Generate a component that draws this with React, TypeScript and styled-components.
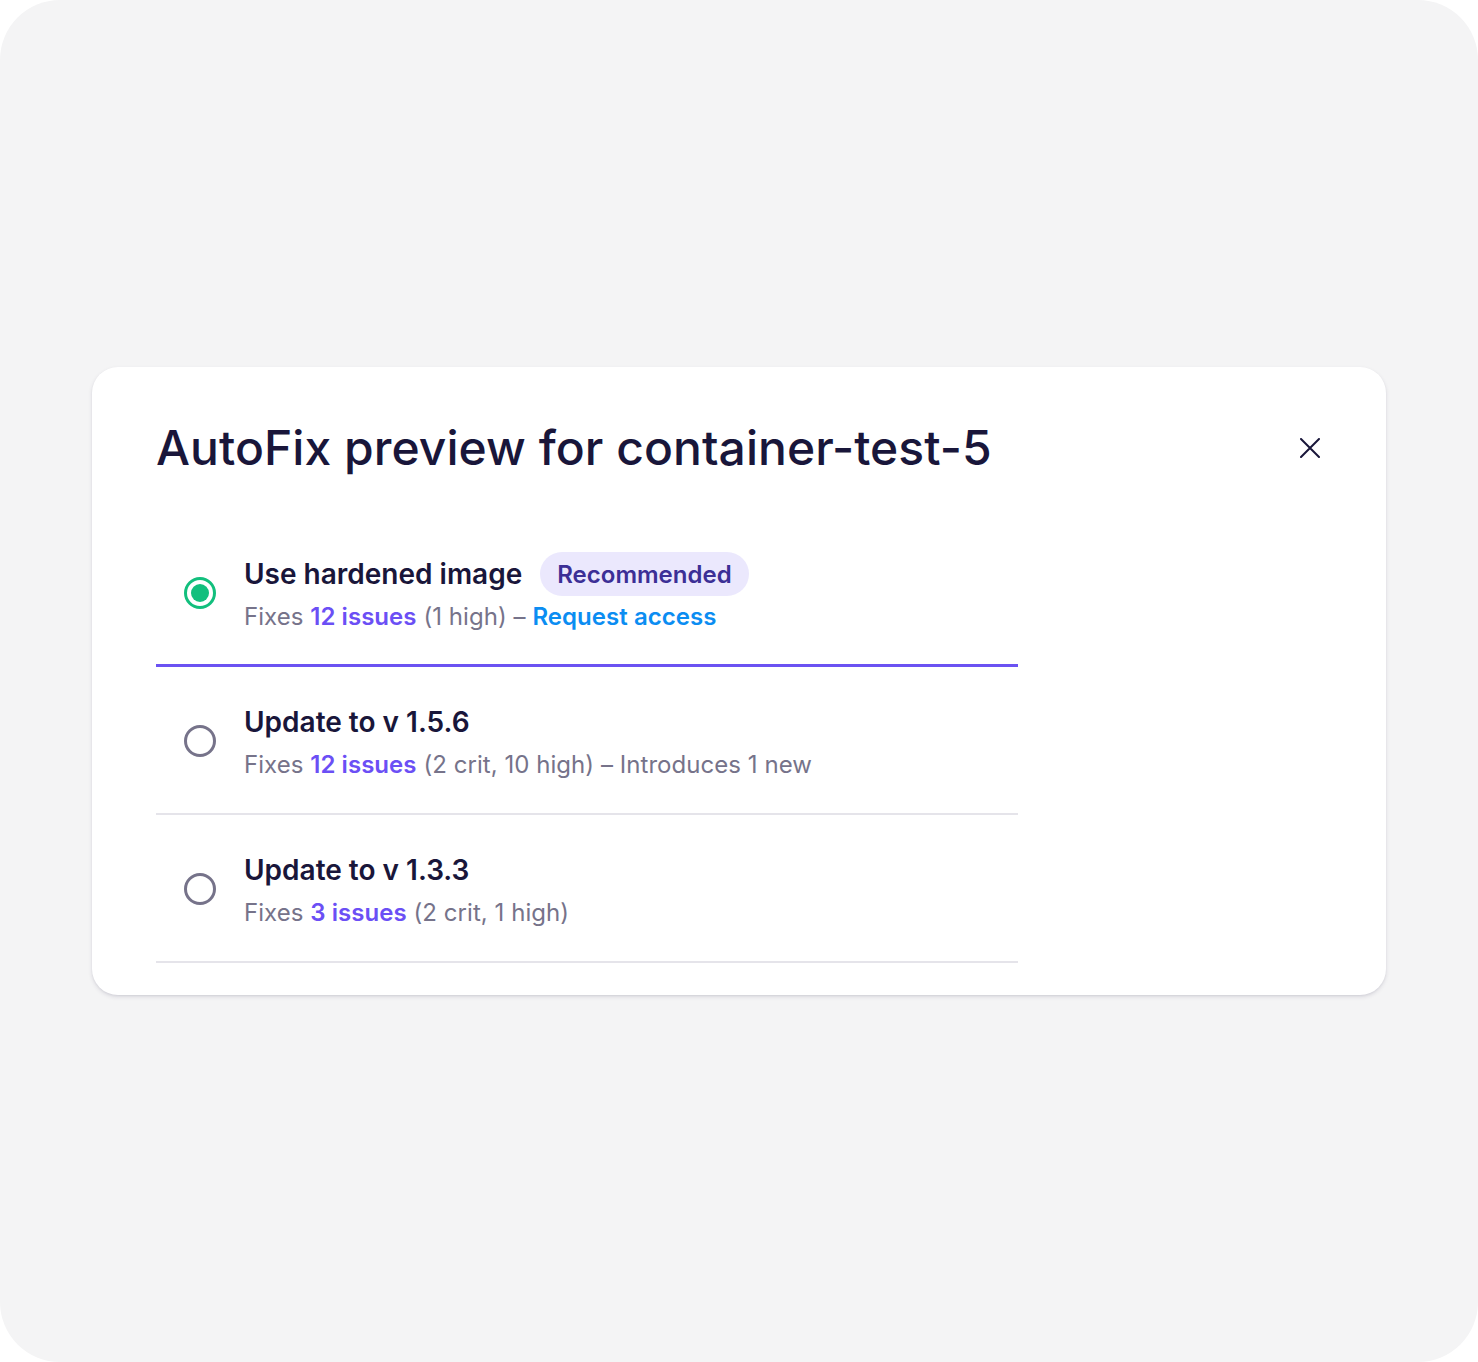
import React from "react";
import styled, { createGlobalStyle } from "styled-components";

const GlobalStyle = createGlobalStyle`
  html, body { margin: 0; padding: 0; background: #ffffff; }
  body { font-family: Inter, "Noto Sans", "Liberation Sans", sans-serif; -webkit-font-smoothing: antialiased; }
  * { box-sizing: border-box; }
`;

const Frame = styled.div`
  width: 1478px;
  height: 1362px;
  border-radius: 60px;
  background: #f4f4f5;
  display: flex;
  align-items: center;
  justify-content: center;
`;

const Card = styled.div`
  width: 1294px;
  background: #ffffff;
  border-radius: 26px;
  box-shadow: 0 2px 4px rgba(40, 36, 70, 0.12), 0 1px 2px rgba(40, 36, 70, 0.06);
  padding: 52px 64px 32px 64px;
  display: flex;
  flex-direction: column;
`;

const Header = styled.div`
  display: flex;
  align-items: center;
  justify-content: space-between;
  margin-bottom: 42px;
`;

const Title = styled.h1`
  margin: 0;
  font-size: 48px;
  line-height: 58px;
  font-weight: 500;
  color: #19163a;
  letter-spacing: 0.05px;
`;

const CloseButton = styled.button`
  width: 24px;
  height: 24px;
  padding: 0;
  border: none;
  background: transparent;
  display: flex;
  align-items: center;
  justify-content: center;
  cursor: pointer;
`;

const List = styled.div`
  width: 862px;
  display: flex;
  flex-direction: column;
`;

const Row = styled.div<{ $selected?: boolean }>`
  display: flex;
  align-items: center;
  gap: 28px;
  padding: 33px 0 ${(p) => (p.$selected ? 31 : 32)}px 28px;
  border-bottom: ${(p) => (p.$selected ? "3px solid #6b52f2" : "2px solid #e5e4ea")};
`;

const Radio = styled.div<{ $selected?: boolean }>`
  width: 32px;
  height: 32px;
  border-radius: 50%;
  border: 3px solid ${(p) => (p.$selected ? "#12bf7d" : "#76738a")};
  display: flex;
  align-items: center;
  justify-content: center;
  flex-shrink: 0;
  &::after {
    content: "";
    display: ${(p) => (p.$selected ? "block" : "none")};
    width: 18px;
    height: 18px;
    border-radius: 50%;
    background: #12bf7d;
  }
`;

const Body = styled.div`
  display: flex;
  flex-direction: column;
  gap: 5px;
`;

const OptionTitleRow = styled.div`
  display: flex;
  align-items: center;
  gap: 18px;
  min-height: 44px;
`;

const OptionTitle = styled.span`
  font-size: 28px;
  line-height: 35px;
  font-weight: 600;
  color: #19163a;
`;

const Badge = styled.span`
  height: 44px;
  padding: 0 17px;
  border-radius: 22px;
  background: #ebe8fd;
  color: #3c2f96;
  font-size: 24px;
  font-weight: 600;
  display: inline-flex;
  align-items: center;
`;

const Subtitle = styled.div`
  font-size: 24px;
  line-height: 32px;
  color: #76738a;
  font-weight: 400;
  letter-spacing: 0.05px;
`;

const Issues = styled.span`
  color: #6b4ff5;
  font-weight: 600;
`;

const Link = styled.a`
  color: #0b8df2;
  font-weight: 600;
  text-decoration: none;
`;

type Option = {
  title: string;
  issues: string;
  detail: string;
  selected?: boolean;
  badge?: string;
  link?: string;
};

const options: Option[] = [
  {
    title: "Use hardened image",
    issues: "12 issues",
    detail: " (1 high) – ",
    selected: true,
    badge: "Recommended",
    link: "Request access",
  },
  {
    title: "Update to v 1.5.6",
    issues: "12 issues",
    detail: " (2 crit, 10 high) – Introduces 1 new",
  },
  {
    title: "Update to v 1.3.3",
    issues: "3 issues",
    detail: " (2 crit, 1 high)",
  },
];

export default function App() {
  return (
    <>
      <GlobalStyle />
      <Frame>
        <Card>
          <Header>
            <Title>AutoFix preview for container-test-5</Title>
            <CloseButton aria-label="Close">
              <svg width="20" height="20" viewBox="0 0 20 20" fill="none">
                <path d="M1 1L19 19M19 1L1 19" stroke="#19163a" strokeWidth="2" strokeLinecap="round" />
              </svg>
            </CloseButton>
          </Header>
          <List>
            {options.map((o) => (
              <Row key={o.title} $selected={o.selected}>
                <Radio $selected={o.selected} />
                <Body>
                  <OptionTitleRow>
                    <OptionTitle>{o.title}</OptionTitle>
                    {o.badge && <Badge>{o.badge}</Badge>}
                  </OptionTitleRow>
                  <Subtitle>
                    Fixes <Issues>{o.issues}</Issues>
                    {o.detail}
                    {o.link && <Link href="#">{o.link}</Link>}
                  </Subtitle>
                </Body>
              </Row>
            ))}
          </List>
        </Card>
      </Frame>
    </>
  );
}
